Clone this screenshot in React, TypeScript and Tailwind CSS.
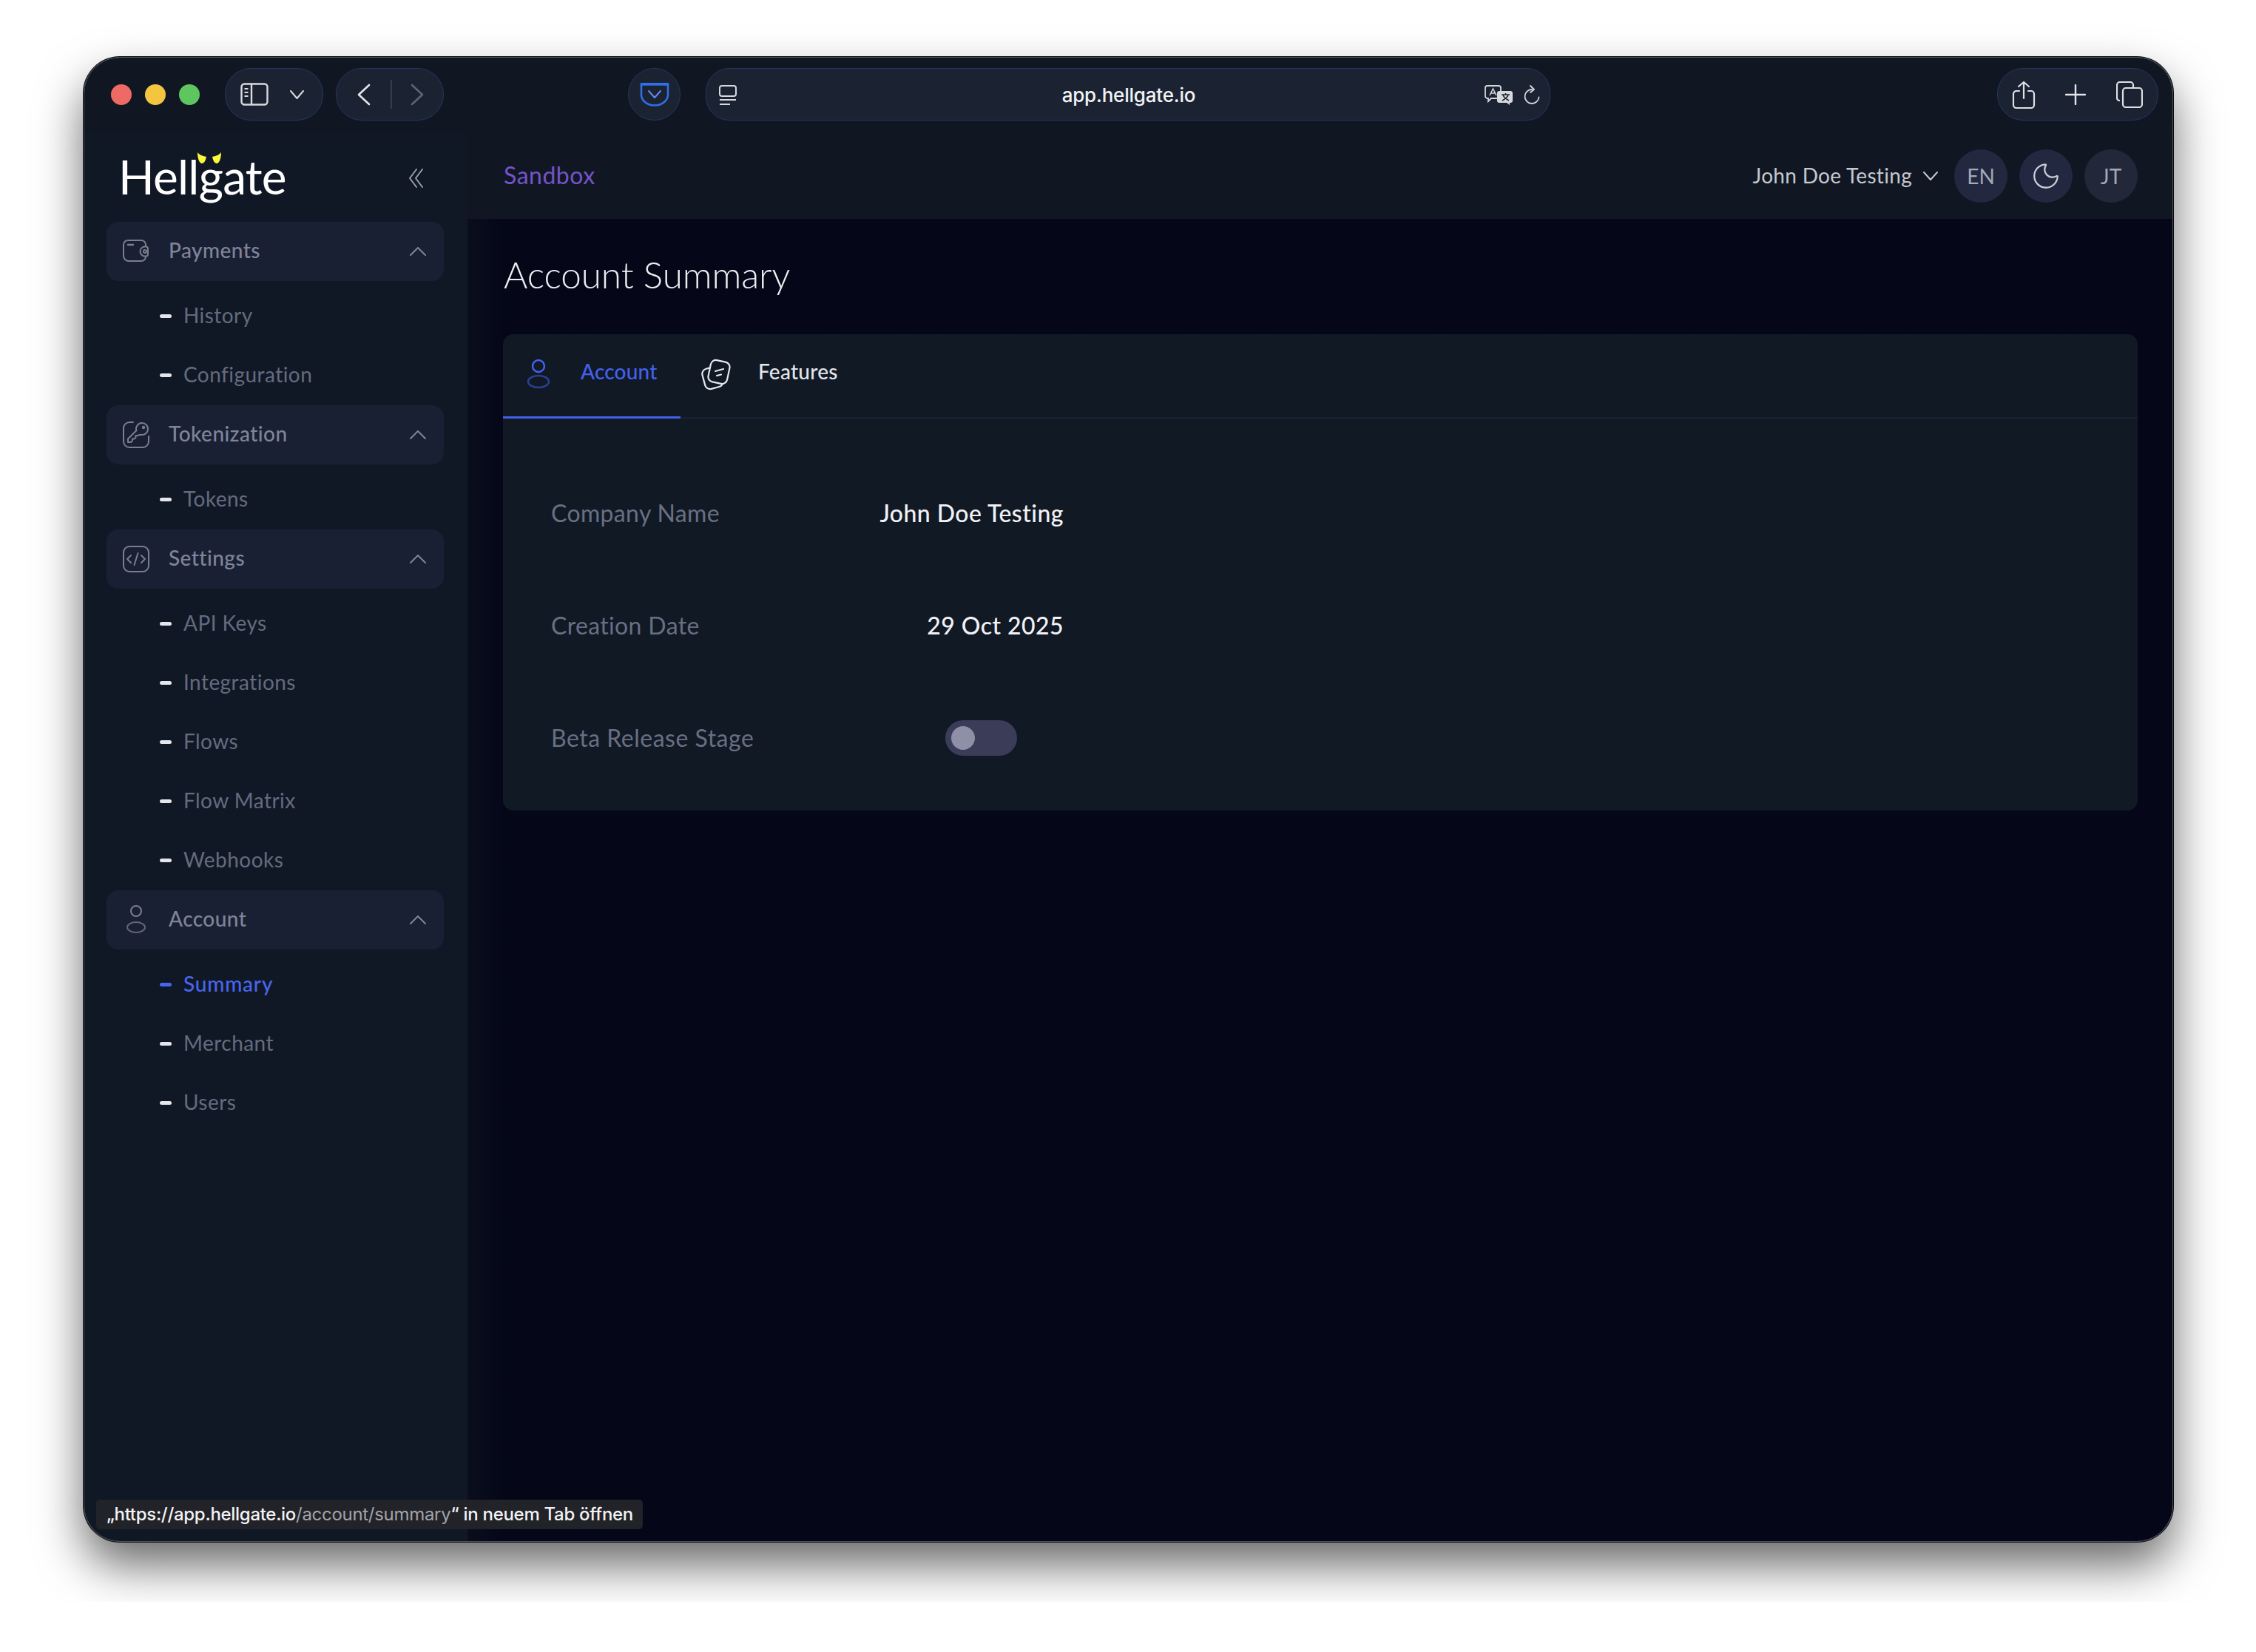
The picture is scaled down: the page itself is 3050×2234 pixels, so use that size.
import { Moon } from 'lucide-react';

const sections = [
	{ title: 'Payments', icon: 'wallet', items: ['History', 'Configuration'] },
	{ title: 'Tokenization', icon: 'key', items: ['Tokens'] },
	{ title: 'Settings', icon: 'code', items: ['API Keys', 'Integrations', 'Flows', 'Flow Matrix', 'Webhooks'] },
	{ title: 'Account', icon: 'user', items: ['Summary', 'Merchant', 'Users'] },
];

function SectionIcon({ name }: { name: string }) {
	const common = {
		width: 36,
		height: 36,
		viewBox: '0 0 36 36',
		fill: 'none',
		stroke: '#7b7e8b',
		strokeWidth: 2,
		strokeLinecap: 'round' as const,
		strokeLinejoin: 'round' as const,
	};
	if (name === 'wallet') {
		return (
			<svg {...common}>
				<path d="M31 11V9a6 6 0 0 0-6-6H7a6 6 0 0 0-6 6v15a7 7 0 0 0 7 7h17a6 6 0 0 0 6-6" />
				<path d="M7 9h7" strokeWidth={2.4} />
				<path d="M31 11.500h-1a6.500 6.500 0 0 0 0 13h1a3 3 0 0 0 3-3v-7a3 3 0 0 0-3-3Z" />
				<circle cx="30" cy="18" r="2" />
			</svg>
		);
	}
	if (name === 'key') {
		return (
			<svg {...common}>
				<path d="M14 1H9a8 8 0 0 0-8 8v18a8 8 0 0 0 8 8h18a8 8 0 0 0 8-8v-7" />
				<path d="M18.300 12.200 7 23.500V28h4l2-2v-2.500h2.500l2-2V19H20l3.700-1.300A8 8 0 1 0 18.300 12.200Z" />
				<circle cx="28" cy="8" r="1.200" />
			</svg>
		);
	}
	if (name === 'code') {
		return (
			<svg {...common}>
				<rect x="1" y="1" width="34" height="34" rx="8" />
				<path d="m11 13-5 5 5 5M25 13l5 5-5 5M20.500 10l-5 16" />
			</svg>
		);
	}
	return (
		<svg width="36" height="40" viewBox="0 0 36 40" fill="none" stroke="#7b7e8b" strokeWidth={2}>
			<circle cx="18" cy="8" r="7" />
			<ellipse cx="18" cy="30" rx="12" ry="7" opacity="0.75" />
		</svg>
	);
}

function Chevron({ up, color, w = 22, h = 10 }: { up?: boolean; color: string; w?: number; h?: number }) {
	return (
		<svg width={w} height={h + 2} viewBox={`0 0 ${w} ${h + 2}`} fill="none" stroke={color} strokeWidth={2} strokeLinecap="round" strokeLinejoin="round">
			<path d={up ? `M1 ${h + 1}L${w / 2} 1L${w - 1} ${h + 1}` : `M1 1L${w / 2} ${h + 1}L${w - 1} 1`} />
		</svg>
	);
}

function Toolbar() {
	return (
		<div className="flex h-[102px] shrink-0 items-start bg-[#101722] pt-[14px] pl-[36px] pr-[19px]">
			<div className="flex h-[71px] items-center gap-[18px]">
				<span className="size-[28px] rounded-full bg-[#ee6a65]" />
				<span className="size-[28px] rounded-full bg-[#f4c63f]" />
				<span className="size-[28px] rounded-full bg-[#5fc65f]" />
			</div>
			<div className="ml-[34px] flex h-[71px] w-[133px] items-center rounded-[35px] border border-[#25385f] bg-[#1b2333] pl-[20px]">
				<svg width="38" height="31" viewBox="0 0 38 31" fill="none" stroke="#d8dadd" strokeWidth={2.4}>
					<rect x="1.500" y="1.500" width="35" height="28" rx="4" />
					<path d="M15 1.500v28" />
					<path d="M5.500 8h5M5.500 13h5M5.500 18h5" strokeWidth={2} />
				</svg>
				<span className="ml-[29px]">
					<Chevron color="#d8dadd" w={19} h={10} />
				</span>
			</div>
			<div className="ml-[17px] flex h-[71px] w-[146px] items-center rounded-[35px] border border-[#25385f] bg-[#1b2333] pl-[28px]">
				<svg width="18" height="30" viewBox="0 0 18 30" fill="none" stroke="#e4e5e8" strokeWidth={2.600} strokeLinecap="round" strokeLinejoin="round">
					<path d="M16 2 2 15l14 13" />
				</svg>
				<span className="ml-[27px] h-[39px] w-[2px] bg-[#343b4c]" />
				<svg className="ml-[25px]" width="18" height="30" viewBox="0 0 18 30" fill="none" stroke="#5e6470" strokeWidth={2.600} strokeLinecap="round" strokeLinejoin="round">
					<path d="m2 2 14 13L2 28" />
				</svg>
			</div>
			<div className="ml-[249px] flex h-[71px] w-[71px] items-center justify-center rounded-full border border-[#25385f] bg-[#1b2333]">
				<svg width="40" height="32" viewBox="0 0 40 32" fill="none" stroke="#2f6fe8" strokeLinecap="round" strokeLinejoin="round">
					<path d="M2 2.500h36V16c0 8-8 14.500-18 14.500S2 24 2 16Z" strokeWidth={2.600} />
					<path d="M2 1.500h36" strokeWidth={3} />
					<path d="m12 11 8 9 8-9" strokeWidth={2} stroke="#5b8cf0" />
				</svg>
			</div>
			<div className="relative ml-[34px] flex h-[71px] w-[1142px] items-center justify-center rounded-[32px] border border-[#25385f] bg-[#1b2333] pl-[2px] pt-[1px] [font-family:Inter,sans-serif] text-[26px] font-medium tracking-[-0.2px] text-[#f2f3f5]">
				<svg className="absolute left-[16px] top-[22px]" width="26" height="28" viewBox="0 0 26 28" fill="none" stroke="#d6d8dc" strokeWidth={2}>
					<rect x="2" y="1" width="22" height="14" rx="3" />
					<path d="M2 20h22" />
					<path d="M2 26h14" />
				</svg>
				app.hellgate.io
				<svg className="absolute left-[1052px] top-[22px]" width="40" height="28" viewBox="0 0 40 28" fill="none" stroke="#d6d8dc" strokeWidth={1.800}>
					<path d="M4 1h15a3 3 0 0 1 3 3v11a3 3 0 0 1-3 3H9l-4 4v-4H4a3 3 0 0 1-3-3V4a3 3 0 0 1 3-3Z" />
					<path d="M7 14 11.500 5 16 14M8.500 11h6" strokeWidth={1.500} />
					<path d="M20 8h15a3 3 0 0 1 3 3v10a3 3 0 0 1-3 3h-1v3l-4-3h-10a3 3 0 0 1-3-3V11a3 3 0 0 1 3-3Z" fill="#d6d8dc" stroke="none" />
					<path d="M23 13h11M28.500 11v2M32 13c-1 4-4 6-8 8M25 13c1 4 4 6 8 8" stroke="#1b2333" strokeWidth={1.500} />
				</svg>
				<svg className="absolute left-[1105px] top-[22px]" width="22" height="28" viewBox="0 0 22 28" fill="none" stroke="#d6d8dc" strokeWidth={1.800} strokeLinecap="round" strokeLinejoin="round">
					<path d="M11 6a9.500 9.500 0 1 0 9.500 10.500" />
					<path d="m9 1 5 5-5 4" />
				</svg>
			</div>
			<div className="ml-auto flex h-[71px] w-[218px] items-center rounded-[35px] border border-[#25385f] bg-[#1b2333] pl-[19px]">
				<svg width="32" height="38" viewBox="0 0 32 38" fill="none" stroke="#dfe0e3" strokeWidth={2.200} strokeLinecap="round" strokeLinejoin="round">
					<path d="M16 24V2M9 8l7-6 7 6" />
					<path d="M10 14H6a4 4 0 0 0-4 4v15a4 4 0 0 0 4 4h20a4 4 0 0 0 4-4V18a4 4 0 0 0-4-4h-4" />
				</svg>
				<svg className="ml-[40px]" width="28" height="28" viewBox="0 0 28 28" fill="none" stroke="#e4e5e8" strokeWidth={2.400} strokeLinecap="round">
					<path d="M14 1v26M1 14h26" />
				</svg>
				<svg className="ml-[41px]" width="36" height="36" viewBox="0 0 36 36" fill="none" stroke="#dfe0e3" strokeWidth={2.200}>
					<path d="M5 26h-.500A3.500 3.500 0 0 1 1 22.500V5a4 4 0 0 1 4-4h14a4 4 0 0 1 4 4v4" />
					<rect x="9" y="9" width="26" height="26" rx="4" fill="#1b2333" />
				</svg>
			</div>
		</div>
	);
}

function Sidebar() {
	return (
		<aside className="w-[518px] shrink-0 bg-[#111825] pl-[30px] pr-[32px]">
			<div className="relative flex h-[120px] items-center">
				<span className="ml-[16px] mb-[2px] text-[64px] leading-none font-normal tracking-[-0.8px] text-white">Hellgate</span>
				<svg className="absolute left-[123px] top-[26px]" width="32" height="16" viewBox="0 0 32 16" fill="#f9f93a">
					<path d="M0 0c2 3 6 5 12 6-1 5-3 9-6 9S0 9 0 0ZM32 0c-2 3-6 5-12 6 1 5 3 9 6 9s6-6 6-15Z" />
				</svg>
				<svg className="absolute left-[408px] top-[48px]" width="22" height="26" viewBox="0 0 22 26" fill="none" stroke="#9a9ea8" strokeWidth={2} strokeLinecap="round" strokeLinejoin="round">
					<path d="M11 1 2 13l9 12M19 1l-9 12 9 12" />
				</svg>
			</div>
			{sections.map((s) => (
				<div key={s.title} className="mb-px">
					<div className="flex h-[80px] items-center rounded-[16px] bg-[#1a2033] pl-[22px] pr-[24px]">
						<SectionIcon name={s.icon} />
						<span className="mb-[4px] ml-[26px] flex-1 text-[28px] font-medium tracking-[0.45px] text-[#7f849b]">{s.title}</span>
						<Chevron up color="#7f8496" />
					</div>
					<div className="pt-[7px]">
						{s.items.map((item) => {
							const active = item === 'Summary';
							return (
								<div key={item} className="flex h-[80px] items-center pl-[72px]">
									<span className={`h-[5px] w-[16px] rounded-full ${active ? 'bg-[#4766ee]' : 'bg-[#e4e6ec]'}`} />
									<span className={`mb-[3px] ml-[16px] text-[28px] ${active ? 'font-medium tracking-[0.8px] text-[#4766ee]' : 'tracking-[0.45px] text-[#646b7f]'}`}>{item}</span>
								</div>
							);
						})}
					</div>
				</div>
			))}
		</aside>
	);
}

function Field({ label, value }: { label: string; value: string }) {
	return (
		<div className="flex h-[152px] items-center">
			<span className="w-[420px] text-[32px] tracking-[0.35px] text-[#696f83]">{label}</span>
			<span className="w-[273px] text-right text-[32px] font-medium tracking-[0.45px] text-[#f1f2f5]">{value}</span>
		</div>
	);
}

function Main() {
	return (
		<main className="min-w-0 flex-1 bg-linear-to-r from-[#0a0e1c] to-[#050719] to-[50px]">
			<div className="flex h-[116px] items-center bg-[#101722] pl-[49px] pr-[47px]">
				<span className="mb-[2px] text-[32px] tracking-[0.5px] text-[#7354c9]">Sandbox</span>
				<div className="ml-auto flex items-center">
					<span className="mb-[3px] text-[28px] tracking-[0.3px] text-[#c5c8d0]">John Doe Testing</span>
					<span className="ml-[15px] mr-[22px]">
						<Chevron color="#c5c8d0" w={20} h={10} />
					</span>
					<div className="flex gap-[16px] text-[28px] text-[#a5a9b6]">
						<span className="flex size-[72px] items-center justify-center rounded-full bg-[#222840]">EN</span>
						<span className="flex size-[72px] items-center justify-center rounded-full bg-[#222840]">
							<Moon size={42} strokeWidth={1.300} color="#c9ccd4" />
						</span>
						<span className="flex size-[72px] items-center justify-center rounded-full bg-[#23273a]">JT</span>
					</div>
				</div>
			</div>
			<div className="pl-[48px] pr-[47px]">
				<h1 className="pt-[50px] pb-[56px] pl-[1px] text-[49.500px] leading-[50px] font-light tracking-[-0.1px] text-[#eceef2]">Account Summary</h1>
				<section className="h-[644px] rounded-[14px] bg-[#111925]">
					<div className="flex h-[114px] border-b-2 border-[#1a2033]">
						<div className="flex h-[114px] w-[240px] items-start border-b-[3px] border-[#4361ee] pt-[33px] pl-[30px]">
							<svg width="36" height="42" viewBox="0 0 36 42" fill="none" stroke="#4361ee" strokeWidth={2.500}>
								<circle cx="18" cy="10" r="8" />
								<ellipse cx="18" cy="31" rx="14" ry="8" opacity="0.55" />
							</svg>
							<span className="ml-[39px] text-[28px] leading-[34px] font-medium tracking-[0.2px] text-[#4361ee]">Account</span>
						</div>
						<div className="flex items-start pt-[33px] pl-[27px]">
							<svg width="42" height="44" viewBox="0 0 42 44" fill="none" stroke="#e6e8ed" strokeWidth={2.200} strokeLinecap="round">
								<rect x="4" y="12" width="25" height="28" rx="7" transform="rotate(-15 16 26)" />
								<rect x="12" y="3" width="26" height="30" rx="7" fill="#111925" transform="rotate(12 25 18)" />
								<path d="m20 17 11-3M22 23l6-1.500" />
							</svg>
							<span className="ml-[36px] text-[28px] leading-[34px] font-medium tracking-[0.25px] text-[#e3e5ea]">Features</span>
						</div>
					</div>
					<div className="pl-[65px] pt-[52px]">
						<Field label="Company Name" value="John Doe Testing" />
						<Field label="Creation Date" value="29 Oct 2025" />
						<div className="flex h-[152px] items-center">
							<span className="w-[533px] text-[32px] tracking-[0.5px] text-[#696f83]">Beta Release Stage</span>
							<span className="flex h-[48px] w-[97px] items-center rounded-full bg-[#3b3d58] pl-[8px]">
								<span className="size-[32px] rounded-full bg-[#8e90a8]" />
							</span>
						</div>
					</div>
				</section>
			</div>
		</main>
	);
}

export default function App() {
	return (
		<div className="h-[2234px] w-[3050px] bg-white [font-family:Lato,sans-serif]">
			<div className="h-[2166px] overflow-hidden pt-[78px] pl-[114px]">
				<div className="relative h-[2006px] w-[2823px] rounded-[48px] shadow-[0_0_0_1px_#50535e,0_0_0_2px_#0a0a0a,0_32px_64px_rgba(0,0,0,0.6)]">
					<div className="flex h-full flex-col overflow-hidden rounded-[48px]">
						<Toolbar />
						<div className="flex min-h-0 flex-1">
							<Sidebar />
							<Main />
						</div>
					</div>
					<div className="absolute left-[16px] bottom-[16px] flex h-[40px] w-[739px] items-center rounded-[5px] bg-[#212329] pl-[14px] [font-family:Inter,sans-serif] text-[24px] font-medium tracking-[-0.3px] text-[#f2f2f4]">
						„https://app.hellgate.io<span className="font-normal text-[#a2a3a8]">/account/summary</span>“ in neuem Tab öffnen
					</div>
				</div>
			</div>
		</div>
	);
}
